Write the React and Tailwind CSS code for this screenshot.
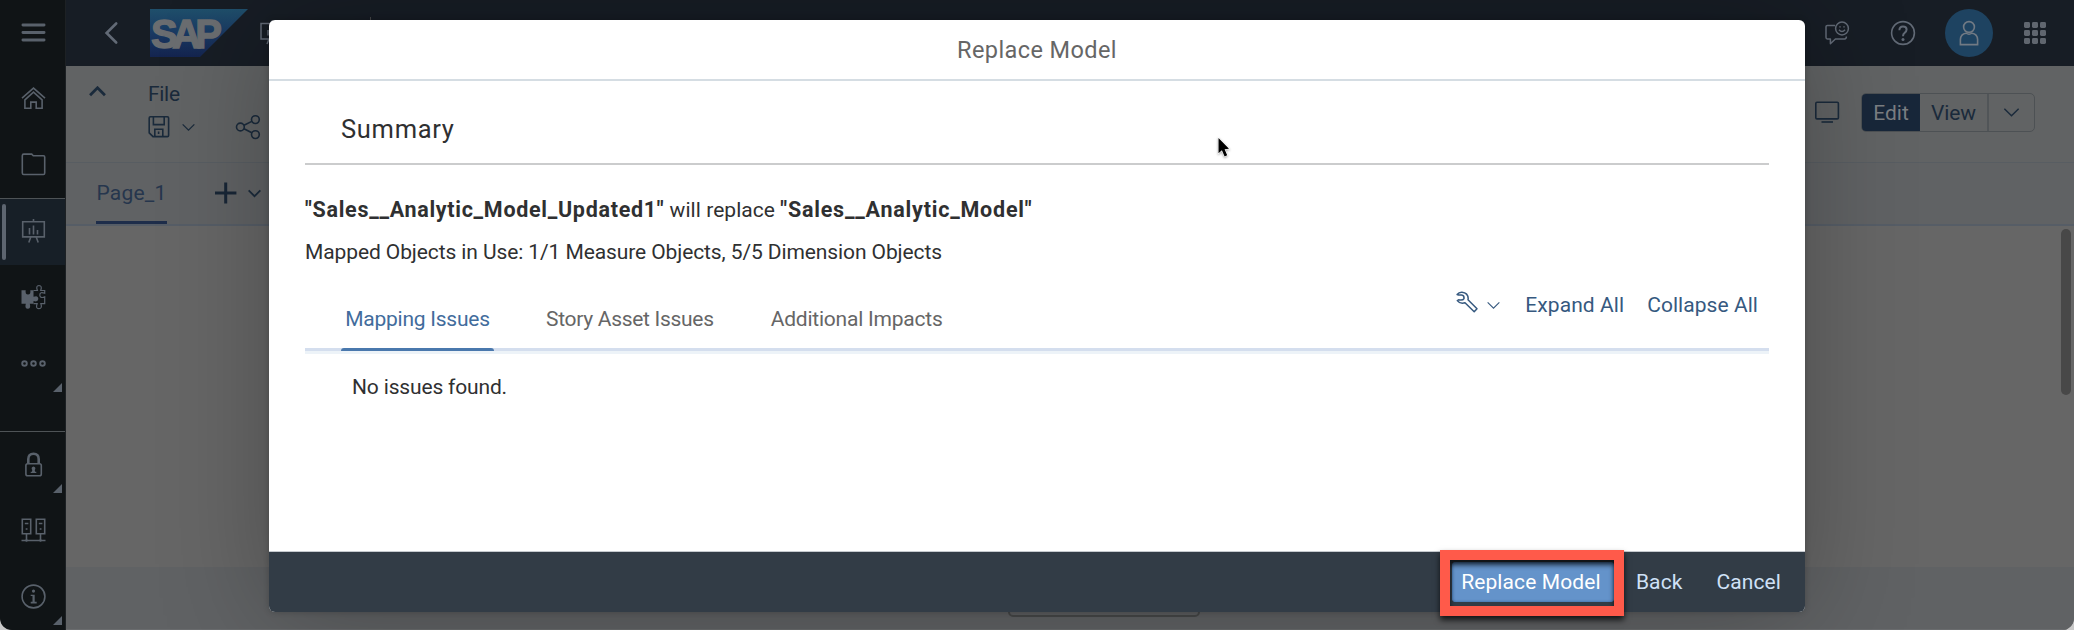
import React from "react";

function SideCell({ top, active, more, children }) {
  return (
    <div className={active ? "relative flex h-[66px] w-[65px] items-center justify-center bg-[#171f27]" : "relative flex h-[66px] w-[65px] items-center justify-center"}>
      {active && <span className="absolute left-[2px] top-[5px] h-[56px] w-[4px] rounded-full bg-[#5d6570]" />}
      <svg className="h-[28px] w-[28px]" viewBox="-0.5 0.5 28 28" fill="none" stroke="#59616b" strokeWidth="1.6">
        {children}
      </svg>
      {more && (
        <svg className="absolute left-[53px] top-[52px] h-[9px] w-[9px]" viewBox="0 0 9 9">
          <path d="M9 0V9H0Z" fill="#59616b" />
        </svg>
      )}
    </div>
  );
}

function Chevron({ className, strokeWidth = 1.4, up }) {
  return (
    <svg className={className} viewBox="0 0 16 10" fill="none" stroke="currentColor" strokeWidth={strokeWidth}>
      <path d={up ? "M1 8.5L8 1.5L15 8.5" : "M1.5 1.5L8 8L14.5 1.5"} />
    </svg>
  );
}

function Sidebar() {
  return (
    <aside className="flex w-[66px] shrink-0 flex-col rounded-bl-[10px] border-r border-[#1d2124] bg-[#101416]">
      <SideCell>
        <path d="M3.4 6.5H24.6M3.4 14H24.6M3.4 21.5H24.6" strokeWidth="2.8" strokeLinecap="round" />
      </SideCell>
      <SideCell>
        <path d="M2.5 13.6L14 3.6L25.5 13.6" />
        <path d="M5.4 15.3V23.8H11.3V17.6H16.7V23.8H22.6V15.3L14 7.6Z" />
      </SideCell>
      <SideCell>
        <path d="M2.8 5.2Q2.8 3.6 4.2 3.6H12.2L13.8 5.2H24Q25.2 5.2 25.2 6.6V22.6Q25.2 24 24 24H4.2Q2.8 24 2.8 22.6Z" />
      </SideCell>
      <div className="h-px w-[65px] bg-[#4e5356]" />
      <SideCell active>
        <path d="M14 1.5V4M3.2 4.2H24.8V19.4H3.2ZM11.3 19.5L9.3 25M16.7 19.5L18.7 25M3.2 3.5V20" />
        <path d="M10 10.5V17M14 8V17M18 12.5V17" />
      </SideCell>
      <SideCell>
        <path d="M2 6.7H6.2Q5.5 10.8 8.5 11.1Q11.5 10.8 10.8 6.7H14V13.3Q18.6 11.3 18.8 15.4Q18.4 19 14 17.4V20.3H10.3Q11.6 25.2 8.3 25.3Q5 25.2 6.3 20.3H2Z" fill="#59616b" stroke="none" />
        <path d="M14 7H17.9Q16 2.2 19.5 2Q23 2.2 21.2 7H25.2V9.8Q20.3 7.8 20.3 11.7Q20.6 15.2 25.2 13.4V20.2H21.4Q23 25 19.4 25.2Q15.8 25 17.6 20.2H14" strokeWidth="1.2" />
      </SideCell>
      <SideCell more>
        <g strokeWidth="1.9">
          <circle cx="5" cy="14" r="2.3" />
          <circle cx="14" cy="14" r="2.3" />
          <circle cx="23" cy="14" r="2.3" />
        </g>
      </SideCell>
      <div className="mt-[34px] h-px w-[65px] bg-[#4e5356]" />
      <SideCell more>
        <rect x="6.4" y="13.2" width="15.4" height="12" rx="1.8" />
        <path d="M8.8 13V8.6Q8.8 3.2 14 3.2Q19.2 3.2 19.2 8.6V13" strokeWidth="2.6" />
        <path d="M14 16A2 2 0 0 1 15.2 19.5L15.6 21.2H16.8V22.6H11.2V21.2H12.4L12.8 19.5A2 2 0 0 1 14 16Z" fill="#59616b" stroke="none" />
      </SideCell>
      <SideCell>
        <path d="M2.8 2.8H11.2V17.2H2.8ZM16.8 2.8H25.2V17.2H16.8ZM7 17.2V24M21 17.2V24M2 24H26" />
        <path d="M5.3 7H8.9M19.3 7H22.9M6.2 12.5H8M20.2 12.5H22" />
        <circle cx="7" cy="24" r="1.2" fill="#59616b" stroke="none" />
        <circle cx="21" cy="24" r="1.2" fill="#59616b" stroke="none" />
      </SideCell>
      <SideCell more>
        <circle cx="14" cy="14" r="11.4" />
        <circle cx="14" cy="8.6" r="1.6" fill="#59616b" stroke="none" />
        <path d="M11.2 12.2H15.2V19.3H17.2V21H11.2V19.3H13V13.6H11.2Z" fill="#59616b" stroke="none" />
      </SideCell>
    </aside>
  );
}

function TopBar() {
  return (
    <header className="flex h-[66px] items-center bg-[#171d25] text-[#626a76]">
      <svg className="ml-[38px] h-[24px] w-[16px]" viewBox="0 0 16 24" fill="none" stroke="currentColor" strokeWidth="2.6" strokeLinecap="round">
        <path d="M12.2 2.5L2.6 12L12.2 21.5" />
      </svg>
      <svg className="ml-[30px] h-[48px] w-[98px]" viewBox="0 0 98 48">
        <defs>
          <linearGradient id="logo" x1="0" y1="0" x2="0" y2="1">
            <stop offset="0" stopColor="#1f4f6b" />
            <stop offset="0.5" stopColor="#193962" />
            <stop offset="1" stopColor="#14244f" />
          </linearGradient>
        </defs>
        <path d="M0 0H98L50 48H0Z" fill="url(#logo)" />
        <text x="1" y="38.5" textLength="71" lengthAdjust="spacing" fontFamily="Liberation Sans" fontWeight="700" fontSize="40" fill="#6a6d70" stroke="#6a6d70" strokeWidth="1.4">SAP</text>
      </svg>
      <svg className="ml-[10px] h-[28px] w-[28px]" viewBox="0 0 28 28" fill="none" stroke="currentColor" strokeWidth="1.5">
        <path d="M14 1.5V4M3 4.6H25V20H3ZM11 20L9 25M17 20L19 25M10 11V16.5M14 8V16.5M18 12.5V16.5" />
      </svg>
      <span className="mb-[3px] ml-[84px] h-[30px] w-px bg-[#4a4b4d]" />
      <div className="ml-auto flex items-center">
        <svg className="h-[28px] w-[28px]" viewBox="0 0 28 28" fill="none" stroke="currentColor" strokeWidth="1.5" strokeLinejoin="round">
          <path d="M12 6.4H4.4Q3 6.4 3 7.8V18.6Q3 20 4.4 20H7.4V24.8L12.4 20H21.6Q23.4 20 23.4 17.6" />
          <circle cx="19" cy="9.5" r="6.4" />
          <path d="M16 10.8Q19 14.4 22 10.8M17 7.2V8.6M21 7.2V8.6" />
        </svg>
        <svg className="ml-[38px] h-[28px] w-[28px]" viewBox="0 0 28 28" fill="none" stroke="currentColor" strokeWidth="1.6">
          <circle cx="14" cy="14" r="11.4" />
          <path d="M10.4 11.2Q10.4 7.4 14 7.4Q17.6 7.4 17.6 10.6Q17.6 12.6 15.6 13.8Q14 14.8 14 17.2" strokeWidth="2" />
          <circle cx="14" cy="20.4" r="1.5" fill="currentColor" stroke="none" />
        </svg>
        <div className="ml-[28px] flex h-[48px] w-[48px] items-center justify-center rounded-full bg-[#1e4361] text-[#717a84]">
          <svg className="h-[28px] w-[24px]" viewBox="0 0 24 28" fill="none" stroke="currentColor" strokeWidth="1.6">
            <circle cx="12" cy="8" r="5.4" />
            <path d="M3.4 25.6V20.4Q3.8 14.8 9 14.2Q12 16.2 15 14.2Q20.2 14.8 20.6 20.4V25.6Z" />
          </svg>
        </div>
        <svg className="ml-[31px] mr-[28px] h-[22px] w-[22px]" viewBox="0 0 22 22" fill="#60666f">
          <rect x="0" y="0" width="6" height="6" rx="1.4" /><rect x="8" y="0" width="6" height="6" rx="1.4" /><rect x="16" y="0" width="6" height="6" rx="1.4" />
          <rect x="0" y="8" width="6" height="6" rx="1.4" /><rect x="8" y="8" width="6" height="6" rx="1.4" /><rect x="16" y="8" width="6" height="6" rx="1.4" />
          <rect x="0" y="16" width="6" height="6" rx="1.4" /><rect x="8" y="16" width="6" height="6" rx="1.4" /><rect x="16" y="16" width="6" height="6" rx="1.4" />
        </svg>
      </div>
    </header>
  );
}

function Toolbar() {
  return (
    <div className="flex h-[97px] border-b border-[#585d62] bg-[#616364] text-[#1a2a3b]">
      <Chevron up strokeWidth={2.6} className="ml-[23px] mt-[20px] h-[11px] w-[17px]" />
      <div className="ml-[42px] flex flex-col pt-[13px]">
        <span className="text-[21px] leading-[30px] tracking-[-0.3px]">File</span>
        <div className="flex items-center pt-[5px]">
          <svg className="h-[24px] w-[22px]" viewBox="0 0 22 24" fill="none" stroke="currentColor" strokeWidth="1.6">
            <path d="M2.4 1.8H19.4Q20.6 1.8 20.6 3V20.4Q20.6 21.6 19.4 21.6H5L1.2 17.8V3Q1.2 1.8 2.4 1.8Z" />
            <path d="M5.4 2V9.6H16.2V2M6.8 21.4V14.2H14.8V21.4M10.6 16.5V19" />
          </svg>
          <Chevron className="ml-[11px] h-[9px] w-[15px]" />
          <svg className="ml-[39px] h-[26px] w-[26px]" viewBox="0 0 26 26" fill="none" stroke="currentColor" strokeWidth="1.6">
            <circle cx="5.4" cy="13" r="3.9" />
            <circle cx="20.4" cy="5.6" r="3.9" />
            <circle cx="20.4" cy="20.6" r="3.9" />
            <path d="M9 11.3L16.8 7.4M9 14.8L16.8 18.8" />
          </svg>
        </div>
      </div>
      <div className="ml-auto flex items-start pr-[39px] pt-[27px]">
        <svg className="mr-[21px] mt-[8px] h-[22px] w-[26px]" viewBox="0 0 26 22" fill="none" stroke="currentColor" strokeWidth="1.6">
          <rect x="1.8" y="1.3" width="22.6" height="16.6" rx="1.2" />
          <path d="M7.5 21H19" />
        </svg>
        <div className="flex h-[39px] w-[174px] overflow-hidden rounded-[5px] border border-[#4d5154] text-[21px] leading-[38px]">
          <span className="w-[58px] bg-[#18273a] text-center text-[#7b7e82]">Edit</span>
          <span className="w-[69px] border-r-2 border-[#515558] text-center tracking-[-0.1px]">View</span>
          <span className="flex flex-1 items-center justify-center">
            <Chevron strokeWidth={1.3} className="h-[11px] w-[19px]" />
          </span>
        </div>
      </div>
    </div>
  );
}

function PageTabs() {
  return (
    <div className="flex h-[63px] items-start border-b-2 border-[#565d66] bg-[#606264]">
      <div className="ml-[30px] flex h-[61px] w-[71px] flex-col border-b-[3px] border-[#1e2d4a] pt-[15px] text-center text-[21px] leading-[30px] text-[#26364d]">
        <span className="tracking-[0.2px]">Page_1</span>
      </div>
      <svg className="ml-[47px] mt-[18px] h-[24px] w-[24px] text-[#182636]" viewBox="0 0 24 24" fill="none" stroke="currentColor" strokeWidth="3">
        <path d="M1 12H22.4M11.7 1.5V22.5" />
      </svg>
      <Chevron strokeWidth={2} className="ml-[9px] mt-[26px] h-[9px] w-[15px] text-[#1a2a3b]" />
    </div>
  );
}

function Dialog() {
  return (
    <section className="absolute left-[269px] top-[20px] flex h-[592px] w-[1536px] flex-col rounded-[6px] bg-white text-[21px] leading-[30px] text-[#2f3031] shadow-[0_4px_110px_rgba(0,0,0,0.26),0_0_6px_rgba(0,0,0,0.2)]">
      <h1 className="h-[61px] border-b-2 border-[#d5dde3] text-center text-[23.5px] leading-[61px] tracking-[0.4px] text-[#666]">Replace Model</h1>
      <div className="flex flex-1 flex-col px-9">
        <h2 className="h-[84px] border-b-2 border-[#cbcccd] pl-[36px] pt-[32px] text-[25.5px] leading-[32px] tracking-[0.7px]">Summary</h2>
        <p className="mt-[30px]">
          <b className="text-[21.5px] tracking-[0.7px]">"Sales__Analytic_Model_Updated1"</b>
          <span className="tracking-[0.05px]"> will replace </span>
          <b className="text-[21.5px] tracking-[0.78px]">"Sales__Analytic_Model"</b>
        </p>
        <p className="mt-[12px] tracking-[-0.1px]">Mapped Objects in Use: 1/1 Measure Objects, 5/5 Dimension Objects</p>
        <div className="flex h-[84px] items-start border-b-[3px] border-[#d4deee] shadow-[0_3px_0_#edf3f8]">
          <nav className="flex pl-9 text-[#666]">
            <span className="-mb-[3px] h-[84px] w-[153px] pt-[37px] text-center tracking-[-0.25px] text-[#426c9c]">
              <span className="block h-[44px]">Mapping Issues</span>
              <span className="block h-[3px] rounded-t-[3px] bg-[#4a78ad]" />
            </span>
            <span className="ml-[52px] pt-[37px] tracking-[-0.3px]">Story Asset Issues</span>
            <span className="ml-[57px] pt-[37px] tracking-[-0.22px]">Additional Impacts</span>
          </nav>
          <div className="ml-auto flex pr-[11px] pt-[23px] text-[#36597f]">
            <svg className="h-[24px] w-[24px]" viewBox="0 0 24 24" fill="none" stroke="currentColor" strokeWidth="1.5" strokeLinejoin="round">
              <path d="M2.1 4.5Q4 2 7 2.2Q13 2.7 13.2 8.6L13 9.8L22 18.8L19.2 21.8L10 12.8Q5 14.2 2.3 10.6L3.6 9.8Q7.8 10.8 9 8.6Q9.4 5.4 6.6 5Q4 5.4 2.1 4.5Z" />
            </svg>
            <Chevron strokeWidth={1.2} className="ml-[7px] mt-[11px] h-[9px] w-[15px]" />
            <span className="ml-[24px] tracking-[0.08px]">Expand All</span>
            <span className="ml-[23px] tracking-[0.05px]">Collapse All</span>
          </div>
        </div>
        <p className="ml-[47px] mt-[21px] tracking-[-0.16px]">No issues found.</p>
      </div>
      <footer className="relative flex h-[61px] items-start justify-end rounded-b-[6px] border-t border-[#c5c9ce] bg-[#323c46] pr-[24px] pt-[10px] leading-[40px] text-[#cfe1f7]">
        <button className="h-[40px] w-[162px] rounded-[4px] bg-[#6493ca] pr-[4px] text-center tracking-[0.1px] text-white shadow-[inset_0_0_2px_1px_#4a7ab4]">Replace Model</button>
        <button className="ml-[22px] tracking-[0.1px]">Back</button>
        <button className="ml-[34px] tracking-[0.1px]">Cancel</button>
        <div className="absolute left-[1171px] top-[-2px] h-[66px] w-[184px] border-[10px] border-[#ff5a4a] shadow-[0_4px_6px_rgba(0,0,0,0.75),inset_0_5px_5px_rgba(0,0,0,0.7)]" />
      </footer>
      <svg className="absolute left-[948px] top-[116px] h-[26px] w-[18px] drop-shadow-[0_1px_1px_rgba(0,0,0,0.35)]" viewBox="0 0 18 26">
        <path d="M1.5 2V17.2L4.9 14.2L7.6 20.4L10.2 19.2L7.6 13.2L12 12.8Z" fill="#000" stroke="#fff" strokeWidth="1.2" paintOrder="stroke" />
      </svg>
    </section>
  );
}

export default function App() {
  return (
    <div className="relative h-[630px] w-[2074px] overflow-hidden bg-[#c9c9c9] font-['Roboto','Liberation_Sans',sans-serif]">
      <div className="flex h-[630px] overflow-hidden rounded-b-[12px] bg-[#666]">
        <Sidebar />
        <div className="flex min-w-0 flex-1 flex-col">
          <TopBar />
          <Toolbar />
          <PageTabs />
          <main className="flex flex-1 justify-end bg-[#666] pr-[3px] pt-[3px]">
            <div className="h-[166px] w-[10px] rounded-full bg-[#484848]" />
          </main>
          <div className="flex h-[63px] justify-center border-b border-[#6a6c6e] bg-[#606264]">
            <div className="ml-[68px] h-[50px] w-[192px] rounded-[5px] border-2 border-[#484a4a]" />
          </div>
        </div>
      </div>
      <Dialog />
    </div>
  );
}
